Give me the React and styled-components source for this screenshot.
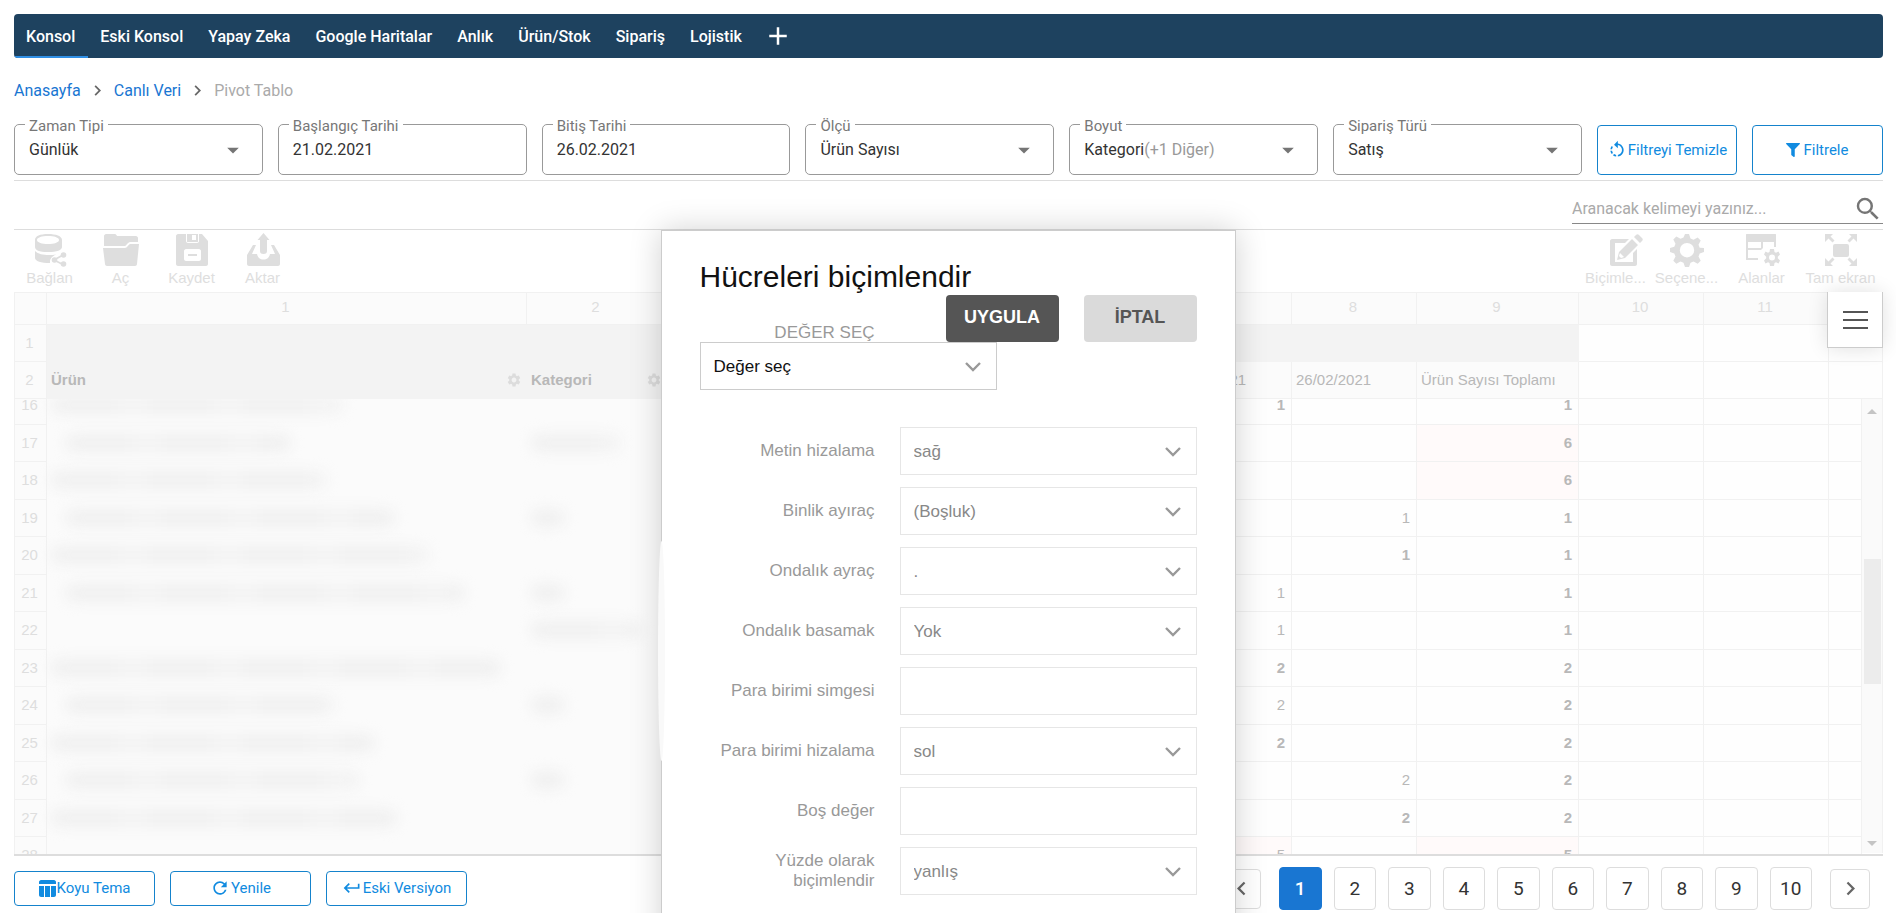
import React from "react";
import styled, { createGlobalStyle, css } from "styled-components";
import {
  MdAdd,
  MdArrowDropDown,
  MdChevronLeft,
  MdChevronRight,
  MdKeyboardReturn,
  MdRefresh,
  MdRotateLeft,
  MdSearch,
  MdSettings,
} from "react-icons/md";
import { FaFilter } from "react-icons/fa";

const navItems = [
  "Konsol",
  "Eski Konsol",
  "Yapay Zeka",
  "Google Haritalar",
  "Anlık",
  "Ürün/Stok",
  "Sipariş",
  "Lojistik",
];

const pages = [1, 2, 3, 4, 5, 6, 7, 8, 9, 10];

// name: [indent, width] and cat: width of the masked text in the first two columns
const rows = [
  { no: 16, name: [0, 292], c7: "1", b7: true, total: "1" },
  { no: 17, name: [14, 226], cat: 90, total: "6", hot: true },
  { no: 18, name: [0, 276], total: "6", hot: true },
  { no: 19, name: [14, 330], cat: 34, c8: "1", total: "1" },
  { no: 20, name: [0, 378], c8: "1", b8: true, total: "1" },
  { no: 21, name: [14, 400], cat: 34, c7: "1", total: "1" },
  { no: 22, cat: 110, c7: "1", total: "1" },
  { no: 23, name: [0, 450], c7: "2", b7: true, total: "2" },
  { no: 24, name: [14, 270], cat: 34, c7: "2", total: "2" },
  { no: 25, name: [0, 324], c7: "2", b7: true, total: "2" },
  { no: 26, name: [14, 294], cat: 34, c8: "2", total: "2" },
  { no: 27, name: [0, 346], c8: "2", b8: true, total: "2" },
  { no: 28, c7: "5", total: "5", hot: true, hot7: true },
];

const formFields = [
  { id: "align", label: "Metin hizalama", value: "sağ" },
  { id: "thousand", label: "Binlik ayıraç", value: "(Boşluk)" },
  { id: "decimal", label: "Ondalık ayraç", value: "." },
  { id: "places", label: "Ondalık basamak", value: "Yok" },
  { id: "symbol", label: "Para birimi simgesi", text: true },
  { id: "symbolAlign", label: "Para birimi hizalama", value: "sol" },
  { id: "empty", label: "Boş değer", text: true },
  { id: "percent", label: "Yüzde olarak biçimlendir", value: "yanlış" },
];

function Columns() {
  return (
    <colgroup>
      <col width="33" />
      <col width="480" />
      <col width="140" />
      <col width="125" />
      <col width="125" />
      <col width="125" />
      <col width="125" />
      <col width="125" />
      <col width="125" />
      <col width="162" />
      <col width="125" />
      <col width="125" />
      <col />
    </colgroup>
  );
}

function Chevron() {
  return (
    <svg width="18" height="12" viewBox="0 0 18 12" fill="none">
      <path d="M2 2l7 7 7-7" stroke="#999" strokeWidth="2.4" />
    </svg>
  );
}

function ConnectIcon() {
  return (
    <svg width="36" height="34" viewBox="0 0 36 34">
      <path
        fillRule="evenodd"
        d="M3 7c0-4 5-6 13-6s14 2 14 6v7c0 3-5 5-14 5S3 17 3 14zm2 0c0 2.500 5 4 11 4s11-1.500 11-4-5-4-11-4S5 4.500 5 7z"
      />
      <path d="M3 18c3 3 8 4 14 4 2 0 5 0 7-.5-3 1.500-6 3.500-6 7V30C9 30 3 28 3 25z" />
      <path d="M31 22l-9 5 9 4.500" fill="none" stroke="currentColor" strokeWidth="1.800" />
      <circle cx="31.500" cy="22" r="2.800" />
      <circle cx="22.500" cy="27" r="2.800" />
      <circle cx="31.500" cy="31" r="2.800" />
    </svg>
  );
}

function OpenIcon() {
  return (
    <svg width="38" height="34" viewBox="0 0 38 34">
      <path d="M2 3c0-1 1-2 2-2h9c1 0 1.500 1 2 2h19c1 0 2 1 2 2v4h-8c-2 0-4 4-5 4H2z" />
      <path d="M1 15h22c2 0 4-4 5-4h9l-2 20c0 1-1 2-2 2H5c-1 0-2-1-2-2z" />
    </svg>
  );
}

function SaveIcon() {
  return (
    <svg width="34" height="34" viewBox="0 0 34 34">
      <path
        fillRule="evenodd"
        d="M3 1h8v7c0 1 1 2 2 2h9c1 0 2-1 2-2V1h3l6 7v23c0 1-1 2-2 2H3c-1 0-2-1-2-2V3c0-1 1-2 2-2zm8 15c-1 0-2 1-2 2v8c0 1 1 2 2 2h13c1 0 2-1 2-2v-8c0-1-1-2-2-2z"
      />
      <path
        fillRule="evenodd"
        d="M12 1h11v7c0 1 0 1-1 1h-9c-1 0-1 0-1-1zm5 1v5h4V2z"
      />
      <path d="M13 21h9v2h-9z" />
    </svg>
  );
}

function ExportIcon() {
  return (
    <svg width="34" height="34" viewBox="0 0 34 34">
      <path d="M17.500 0l6 7H21v11c0 2-1 3-3.500 3S14 20 14 18V7h-2.500z" />
      <path d="M7 12h3L6 21h5c1 4 3 5.500 6.500 5.500S23 25 24 21h5l-4-9h3l6 10v9c0 1-1 2-2 2H3c-1 0-2-1-2-2v-9z" />
    </svg>
  );
}

// the left part of the box stays empty, the drawing sits over the end of the caption
function FormatIcon() {
  return (
    <svg width="54" height="34" viewBox="-20 0 54 34">
      <path
        fillRule="evenodd"
        d="M3 6h17l-4 4H6v19h18V20l4-4v15c0 1-1 2-2 2H3c-1 0-2-1-2-2V8c0-1 1-2 2-2z"
      />
      <path d="M25 4l6 6 2-2c1-1 1-2 0-3l-3-3c-1-1-2-1-3 0zM23 6L10 19 8 27l8-2 13-13z" />
      <path d="M11 20l4 4-3 1-2-2z" fill="#fff" />
    </svg>
  );
}

function GearIcon() {
  return (
    <svg width="34" height="34" viewBox="0 0 34 34">
      <path
        fillRule="evenodd"
        d="M15 1h4l1.500 4.500 3 1.200 4.200-2.200 3 3-2.200 4.200 1.200 3L34 15v4l-4.300 1.500-1.200 3 2.200 4.200-3 3-4.200-2.200-3 1.200L19 34h-4l-1.500-4.300-3-1.200-4.200 2.200-3-3 2.200-4.200-1.200-3L0 19v-4l4.300-1.300 1.200-3-2.200-4.200 3-3 4.200 2.200 3-1.200zm2 9a7.200 7.200 0 100 14.400A7.200 7.200 0 0017 10z"
      />
    </svg>
  );
}

function FieldsIcon() {
  return (
    <svg width="36" height="34" viewBox="0 0 36 34">
      <path
        fillRule="evenodd"
        d="M3 1h28c1 0 1 0 1 1v12h-2V9H19v6l-2 2H4v8h10v2H3c-1 0-1 0-1-1V2c0-1 0-1 1-1zm1 8v6h13V9z"
      />
      <path
        fillRule="evenodd"
        d="M26 16h4l.5 3 1.500.8 2.500-1.300 1.500 3-2.200 2.200v1.600L36 27.500l-1.500 3-2.500-1.200-1.500.7-.5 3h-4l-.5-3-1.500-.8-2.500 1.300-1.500-3 2.200-2.200v-1.600L20 21.500l1.500-3 2.500 1.200 1.500-.7zm2 5.500a3 3 0 100 6 3 3 0 000-6z"
      />
    </svg>
  );
}

function FullscreenIcon() {
  return (
    <svg width="34" height="34" viewBox="0 0 34 34">
      <rect x="9" y="11" width="16" height="13" rx="2" />
      <path d="M1 1h8L6.500 3.500l4 4-2 2-4-4L1 9zM33 1v8l-3.500-3.500-4 4-2-2 4-4L25 1zM1 33v-8l3.500 3.500 4-4 2 2-4 4L9 33zM33 33h-8l2.500-2.500-4-4 2-2 4 4L33 25z" />
    </svg>
  );
}

function ThemeIcon() {
  return (
    <svg width="17" height="17" viewBox="0 0 17 17" fill="currentColor">
      <path d="M2 0h13c1 0 2 1 2 2v2H0V2c0-1 1-2 2-2zM0 6h5v11H2c-1 0-2-1-2-2zM6 6h5v11H6zM12 6h5v9c0 1-1 2-2 2h-3z" />
    </svg>
  );
}

function FilterField({ id, label, value, select }) {
  return (
    <Field>
      <label htmlFor={id}>{label}</label>
      {select ? (
        <>
          <select id={id}>
            <option>{value}</option>
          </select>
          <MdArrowDropDown />
        </>
      ) : (
        <input id={id} defaultValue={value} />
      )}
    </Field>
  );
}

function Tool({ icon, text, wide }) {
  return (
    <ToolButton $wide={wide}>
      {icon}
      <span>{text}</span>
    </ToolButton>
  );
}

function PivotGrid() {
  return (
    <Pivot>
      <PivotTools>
        <div>
          <Tool icon={<ConnectIcon />} text="Bağlan" />
          <Tool icon={<OpenIcon />} text="Aç" />
          <Tool icon={<SaveIcon />} text="Kaydet" />
          <Tool icon={<ExportIcon />} text="Aktar" />
        </div>
        <div>
          <Tool icon={<FormatIcon />} text="Biçimle..." />
          <Tool icon={<GearIcon />} text="Seçene..." />
          <Tool icon={<FieldsIcon />} text="Alanlar" wide />
          <Tool icon={<FullscreenIcon />} text="Tam ekran" wide />
        </div>
      </PivotTools>
      <GridTable $head>
        <Columns />
        <thead>
          <tr>
            <th></th>
            {[1, 2, 3, 4, 5, 6, 7, 8, 9, 10, 11].map((n) => (
              <th key={n}>{n}</th>
            ))}
            <th></th>
          </tr>
        </thead>
        <tbody>
          <tr>
            <NumCell>1</NumCell>
            <Cell $tone="dark" colSpan={9}></Cell>
            <Cell></Cell>
            <Cell></Cell>
            <Cell></Cell>
          </tr>
          <tr>
            <NumCell>2</NumCell>
            <Cell $tone="dark" $bold>
              <Caption>
                Ürün <MdSettings />
              </Caption>
            </Cell>
            <Cell $tone="dark" $bold>
              <Caption>
                Kategori <MdSettings />
              </Caption>
            </Cell>
            <Cell $tone="light">21/02/2021</Cell>
            <Cell $tone="light">22/02/2021</Cell>
            <Cell $tone="light">23/02/2021</Cell>
            <Cell $tone="light">24/02/2021</Cell>
            <Cell $tone="light">25/02/2021</Cell>
            <Cell $tone="light">26/02/2021</Cell>
            <Cell $tone="light">Ürün Sayısı Toplamı</Cell>
            <Cell></Cell>
            <Cell></Cell>
            <Cell></Cell>
          </tr>
        </tbody>
      </GridTable>
      <GridBody>
        <GridTable>
          <Columns />
          <tbody>
            {rows.map((r) => (
              <tr key={r.no}>
                <NumCell>{r.no}</NumCell>
                <Cell $masked>{r.name && <Smudge $indent={r.name[0]} $width={r.name[1]} />}</Cell>
                <Cell $masked>{r.cat && <Smudge $indent={0} $width={r.cat} />}</Cell>
                <Cell></Cell>
                <Cell></Cell>
                <Cell></Cell>
                <Cell></Cell>
                <Cell $num $bold={r.b7} $tone={r.hot7 && "hot"}>
                  {r.c7}
                </Cell>
                <Cell $num $bold={r.b8}>
                  {r.c8}
                </Cell>
                <Cell $num $bold $tone={r.hot && "hot"}>
                  {r.total}
                </Cell>
                <Cell></Cell>
                <Cell></Cell>
                <Cell></Cell>
              </tr>
            ))}
          </tbody>
        </GridTable>
        <Scrollbar>
          <i className="up" />
          <span />
          <i className="down" />
        </Scrollbar>
      </GridBody>
      <MenuButton aria-label="Menü">
        <i />
        <i />
        <i />
      </MenuButton>
    </Pivot>
  );
}

function FormatModal() {
  return (
    <Modal role="dialog" aria-labelledby="format-title">
      <h2 id="format-title">Hücreleri biçimlendir</h2>
      <ModalActions>
        <label htmlFor="pick">DEĞER SEÇ</label>
        <div>
          <ModalButton $primary>UYGULA</ModalButton>
          <ModalButton>İPTAL</ModalButton>
        </div>
      </ModalActions>
      <PickBox $dark>
        <select id="pick">
          <option>Değer seç</option>
        </select>
        <Chevron />
      </PickBox>
      <ModalForm>
        {formFields.map((f) => (
          <ModalRow key={f.id}>
            <label htmlFor={f.id}>{f.label}</label>
            <PickBox>
              {f.text ? (
                <input id={f.id} />
              ) : (
                <>
                  <select id={f.id}>
                    <option>{f.value}</option>
                  </select>
                  <Chevron />
                </>
              )}
            </PickBox>
          </ModalRow>
        ))}
      </ModalForm>
      <EdgeHaze />
    </Modal>
  );
}

function App() {
  return (
    <Page>
      <GlobalStyle />
      <Nav>
        {navItems.map((item, i) => (
          <NavLink href="#" key={item} $active={i === 0}>
            {item}
          </NavLink>
        ))}
        <button aria-label="Ekle">
          <MdAdd />
        </button>
      </Nav>
      <Breadcrumb>
        <a href="#">Anasayfa</a>
        <MdChevronRight />
        <a href="#">Canlı Veri</a>
        <MdChevronRight />
        <span>Pivot Tablo</span>
      </Breadcrumb>
      <Filters>
        <FilterField id="type" label="Zaman Tipi" value="Günlük" select />
        <FilterField id="start" label="Başlangıç Tarihi" value="21.02.2021" />
        <FilterField id="end" label="Bitiş Tarihi" value="26.02.2021" />
        <FilterField id="measure" label="Ölçü" value="Ürün Sayısı" select />
        <Field>
          <label htmlFor="dimension">Boyut</label>
          <button id="dimension">
            Kategori<small>(+1 Diğer)</small>
          </button>
          <MdArrowDropDown />
        </Field>
        <FilterField id="order" label="Sipariş Türü" value="Satış" select />
        <OutlineButton $width={140} $tall>
          <MdRotateLeft />
          Filtreyi Temizle
        </OutlineButton>
        <OutlineButton $width={131} $tall>
          <FaFilter className="small" />
          Filtrele
        </OutlineButton>
      </Filters>
      <SearchRow>
        <SearchBox>
          <input aria-label="Ara" placeholder="Aranacak kelimeyi yazınız..." />
          <MdSearch />
        </SearchBox>
      </SearchRow>
      <Workspace>
        <PivotGrid />
        <Footer>
          <div>
            <OutlineButton $width={141}>
              <ThemeIcon />
              Koyu Tema
            </OutlineButton>
            <OutlineButton $width={141}>
              <MdRefresh />
              Yenile
            </OutlineButton>
            <OutlineButton $width={141}>
              <MdKeyboardReturn />
              Eski Versiyon
            </OutlineButton>
          </div>
          <Pager>
            <PageArrow aria-label="Önceki">
              <MdChevronLeft />
            </PageArrow>
            <PageList>
              {pages.map((p) => (
                <PageButton key={p} $active={p === 1}>
                  {p}
                </PageButton>
              ))}
            </PageList>
            <PageArrow aria-label="Sonraki">
              <MdChevronRight />
            </PageArrow>
          </Pager>
        </Footer>
        <FormatModal />
      </Workspace>
    </Page>
  );
}

export default App;

const GlobalStyle = createGlobalStyle`
  * {
    box-sizing: border-box;
  }
  body {
    margin: 0;
    background: #fff;
    font-family: Roboto, "Liberation Sans", sans-serif;
    font-size: 16px;
    color: #333;
  }
  button, input, select {
    font-family: inherit;
    margin: 0;
    outline: none;
  }
  button {
    cursor: pointer;
  }
  a {
    text-decoration: none;
  }
`;

const Page = styled.div`
  height: 100vh;
  padding: 14px 13px 0 14px;
  display: flex;
  flex-direction: column;
  overflow: hidden;
`;

const Nav = styled.nav`
  display: flex;
  height: 44px;
  flex-shrink: 0;
  background-color: #1e425f;
  border-radius: 4px;
  overflow: hidden;
  > button {
    display: flex;
    align-items: center;
    padding: 0 8px;
    border: none;
    background: none;
    color: white;
    font-size: 30px;
  }
`;

const NavLink = styled.a`
  display: flex;
  align-items: center;
  padding: 2px 13px 0 12px;
  color: white;
  font-weight: 500;
  border-bottom: 2px solid ${(p) => (p.$active ? "#2f8fe5" : "transparent")};
`;

const Breadcrumb = styled.div`
  display: flex;
  align-items: center;
  height: 66px;
  flex-shrink: 0;
  padding-bottom: 2px;
  a {
    color: #1976d2;
  }
  span {
    color: #aaa;
  }
  svg {
    color: #666;
    font-size: 21px;
    margin: 0 6px;
  }
`;

const Filters = styled.div`
  display: flex;
  align-items: flex-end;
  gap: 15px;
  flex-shrink: 0;
  padding-bottom: 5px;
  border-bottom: 1px solid #ddd;
`;

const Field = styled.div`
  position: relative;
  flex: 1;
  min-width: 0;
  height: 51px;
  border: 1px solid #999;
  border-radius: 5px;
  > label {
    position: absolute;
    top: -9px;
    left: 10px;
    padding: 0 4px;
    background: #fff;
    color: #777;
    font-size: 15px;
    line-height: 20px;
  }
  > input,
  > select,
  > button {
    appearance: none;
    display: block;
    width: 100%;
    height: 49px;
    padding: 0 14px;
    border: none;
    background: none;
    text-align: left;
    font-size: 16px;
    color: #333;
  }
  small {
    color: #999;
    font-size: 16px;
  }
  > svg {
    position: absolute;
    top: 11px;
    right: 15px;
    font-size: 28px;
    color: #757575;
    pointer-events: none;
  }
`;

const OutlineButton = styled.button`
  display: flex;
  align-items: center;
  justify-content: center;
  gap: 1px;
  width: ${(p) => p.$width}px;
  height: ${(p) => (p.$tall ? 50 : 35)}px;
  padding: 0 0 1px;
  flex-shrink: 0;
  border: 1px solid #1583cc;
  border-radius: 4px;
  background: #fff;
  color: #118be0;
  font-size: 15px;
  white-space: nowrap;
  svg {
    font-size: 20px;
  }
  .small {
    font-size: 14px;
    margin-right: 2px;
  }
`;

const SearchRow = styled.div`
  display: flex;
  justify-content: flex-end;
  align-items: flex-end;
  height: 49px;
  flex-shrink: 0;
  padding-bottom: 5px;
  border-bottom: 1px solid #ddd;
`;

const SearchBox = styled.div`
  display: flex;
  align-items: center;
  width: 311px;
  height: 32px;
  padding-top: 2px;
  border-bottom: 1px solid #888;
  input {
    flex: 1;
    min-width: 0;
    padding: 0;
    border: none;
    font-size: 16px;
    &::placeholder {
      color: #aaa;
    }
  }
  svg {
    font-size: 30px;
    color: #757575;
  }
`;

const Workspace = styled.div`
  position: relative;
  flex: 1;
  min-height: 0;
  display: flex;
  flex-direction: column;
`;

const Pivot = styled.section`
  position: relative;
  flex: 1;
  min-height: 0;
  display: flex;
  flex-direction: column;
  border-bottom: 2px solid #ddd;
  font-family: "Liberation Sans", Arial, sans-serif;
`;

const PivotTools = styled.div`
  display: flex;
  justify-content: space-between;
  height: 62px;
  flex-shrink: 0;
  padding-right: 3px;
  > div {
    display: flex;
  }
`;

const ToolButton = styled.button`
  display: flex;
  flex-direction: column;
  align-items: center;
  width: ${(p) => (p.$wide ? 79 : 71)}px;
  padding: 3px 0 0;
  border: none;
  background: none;
  color: #dedede;
  font-size: 15px;
  line-height: 22px;
  white-space: nowrap;
  svg {
    fill: currentColor;
  }
`;

const GridTable = styled.table`
  width: 100%;
  flex: 1;
  table-layout: fixed;
  border-collapse: separate;
  border-spacing: 0;
  font-size: 15px;
  th,
  td {
    height: 37px;
    padding: 0 6px 1px 4px;
    border-right: 1px solid #f1f1f1;
    border-bottom: 1px solid #f1f1f1;
    line-height: 18px;
    white-space: nowrap;
  }
  td:first-child,
  th:first-child {
    border-left: 1px solid #f1f1f1;
  }
  th {
    height: 33px;
    padding-bottom: 3px;
    border-top: 1px solid #f1f1f1;
    background: #fbfbfb;
    color: #dedede;
    font-weight: 400;
  }
  ${(p) =>
    p.$head
      ? css`
          flex: none;
        `
      : css`
          align-self: flex-start;
          margin-top: -12px;
          tr:nth-child(odd) td {
            height: 38px;
          }
        `}
`;

const NumCell = styled.td`
  background: #fbfbfb;
  color: #dedede;
  text-align: center;
`;

const tones = { dark: "#f3f3f3", light: "#fbfbfb", hot: "#fffafa" };

const Cell = styled.td`
  background: ${(p) => tones[p.$tone] || "#fefefe"};
  color: #b8b8b8;
  font-weight: ${(p) => (p.$bold ? 700 : 400)};
  text-align: ${(p) => (p.$num ? "right" : "left")};
  ${(p) =>
    p.$tone === "dark" &&
    css`
      && {
        border-color: #f3f3f3;
      }
    `}
  ${(p) =>
    p.$masked &&
    css`
      && {
        background: #fbfbfb;
        border-color: #fbfbfb;
      }
    `}
`;

const Caption = styled.div`
  display: flex;
  align-items: center;
  justify-content: space-between;
  margin-right: -2px;
  svg {
    font-size: 16px;
    color: #dcdcdc;
  }
`;

const Smudge = styled.div`
  width: ${(p) => p.$width}px;
  height: 18px;
  margin-left: ${(p) => p.$indent}px;
  background: repeating-linear-gradient(90deg, #f0f0f0 0 60px, #f3f3f3 74px 96px);
  border-radius: 9px;
  filter: blur(7px);
`;

const GridBody = styled.div`
  display: flex;
  flex: 1;
  min-height: 0;
  overflow: hidden;
  padding-bottom: 1px;
`;

const Scrollbar = styled.div`
  display: flex;
  flex-direction: column;
  align-items: center;
  justify-content: space-between;
  width: 21px;
  padding: 10px 0 7px;
  background: #fafafa;
  border-right: 1px solid #f1f1f1;
  i {
    border: 5px solid transparent;
  }
  .up {
    border-top: none;
    border-bottom-color: #c4c4c4;
  }
  .down {
    border-bottom: none;
    border-top-color: #c4c4c4;
  }
  span {
    width: 17px;
    height: 125px;
    margin-bottom: 12px;
    background: #ececec;
  }
`;

const MenuButton = styled.button`
  position: absolute;
  top: 62px;
  right: 0;
  display: flex;
  flex-direction: column;
  align-items: center;
  justify-content: center;
  gap: 6px;
  width: 56px;
  height: 56px;
  border: 1px solid #ccc;
  border-top: none;
  background: #fff;
  box-shadow: 0 0 20px rgba(0, 0, 0, 0.12);
  i {
    width: 25px;
    height: 2px;
    background: #555;
  }
`;

const Footer = styled.div`
  display: flex;
  justify-content: space-between;
  height: 57px;
  flex-shrink: 0;
  > div:first-child {
    display: flex;
    gap: 15px;
    padding-top: 15px;
    align-items: flex-start;
  }
`;

const Pager = styled.div`
  display: flex;
  align-items: center;
  gap: 18px;
  height: 43px;
  margin: 11px 13px 0 0;
`;

const PageList = styled.div`
  display: flex;
  gap: 12px;
  width: 533px;
`;

const PageButton = styled.button`
  flex: 1;
  height: 43px;
  padding: 0 0 1px;
  border: 1px solid ${(p) => (p.$active ? "#1976d2" : "#ddd")};
  border-radius: 4px;
  background: ${(p) => (p.$active ? "#1976d2" : "#fff")};
  color: ${(p) => (p.$active ? "#fff" : "#333")};
  font-size: 19px;
  font-weight: ${(p) => (p.$active ? 500 : 400)};
`;

const PageArrow = styled.button`
  display: flex;
  align-items: center;
  justify-content: center;
  width: 40px;
  height: 40px;
  padding: 0;
  border: 1px solid #ddd;
  border-radius: 4px;
  background: #fff;
  color: #666;
  font-size: 27px;
`;

const Modal = styled.div`
  position: absolute;
  top: 0;
  left: 50%;
  width: 575px;
  margin-left: -288px;
  padding: 28px 38px 60px;
  border: 1px solid #ccc;
  background: #fff;
  box-shadow: 0 0 30px rgba(0, 0, 0, 0.18);
  font-family: "Liberation Sans", Arial, sans-serif;
  h2 {
    margin: 0;
    font-size: 30px;
    font-weight: 400;
    line-height: 36px;
    color: #111;
  }
  label {
    width: 175px;
    text-align: right;
    font-size: 17px;
    line-height: 20px;
    color: #999;
  }
`;

const ModalActions = styled.div`
  display: flex;
  align-items: flex-end;
  justify-content: space-between;
  > label {
    line-height: 18px;
  }
  > div {
    display: flex;
    gap: 25px;
  }
`;

const ModalButton = styled.button`
  width: 113px;
  height: 47px;
  padding: 0 0 2px;
  border: none;
  border-radius: 4px;
  background: ${(p) => (p.$primary ? "#555" : "#dadada")};
  color: ${(p) => (p.$primary ? "#fff" : "#555")};
  font-size: 18px;
  font-weight: 700;
`;

const PickBox = styled.div`
  position: relative;
  width: 297px;
  height: 48px;
  border: 1px solid ${(p) => (p.$dark ? "#ccc" : "#e6e6e6")};
  select,
  input {
    appearance: none;
    display: block;
    width: 100%;
    height: 46px;
    padding: 0 13px;
    border: none;
    background: none;
    font-size: 17px;
    color: ${(p) => (p.$dark ? "#111" : "#888")};
  }
  svg {
    position: absolute;
    top: 18px;
    right: 14px;
    pointer-events: none;
  }
`;

const ModalForm = styled.div`
  display: flex;
  flex-direction: column;
  gap: 12px;
  margin-top: 37px;
`;

const ModalRow = styled.div`
  display: flex;
  align-items: center;
  justify-content: space-between;
`;

// the masked table area runs slightly over the left edge of the dialog
const EdgeHaze = styled.div`
  position: absolute;
  top: 310px;
  left: -4px;
  width: 7px;
  height: 220px;
  border-radius: 50%;
  background: #f9f9f9;
`;
